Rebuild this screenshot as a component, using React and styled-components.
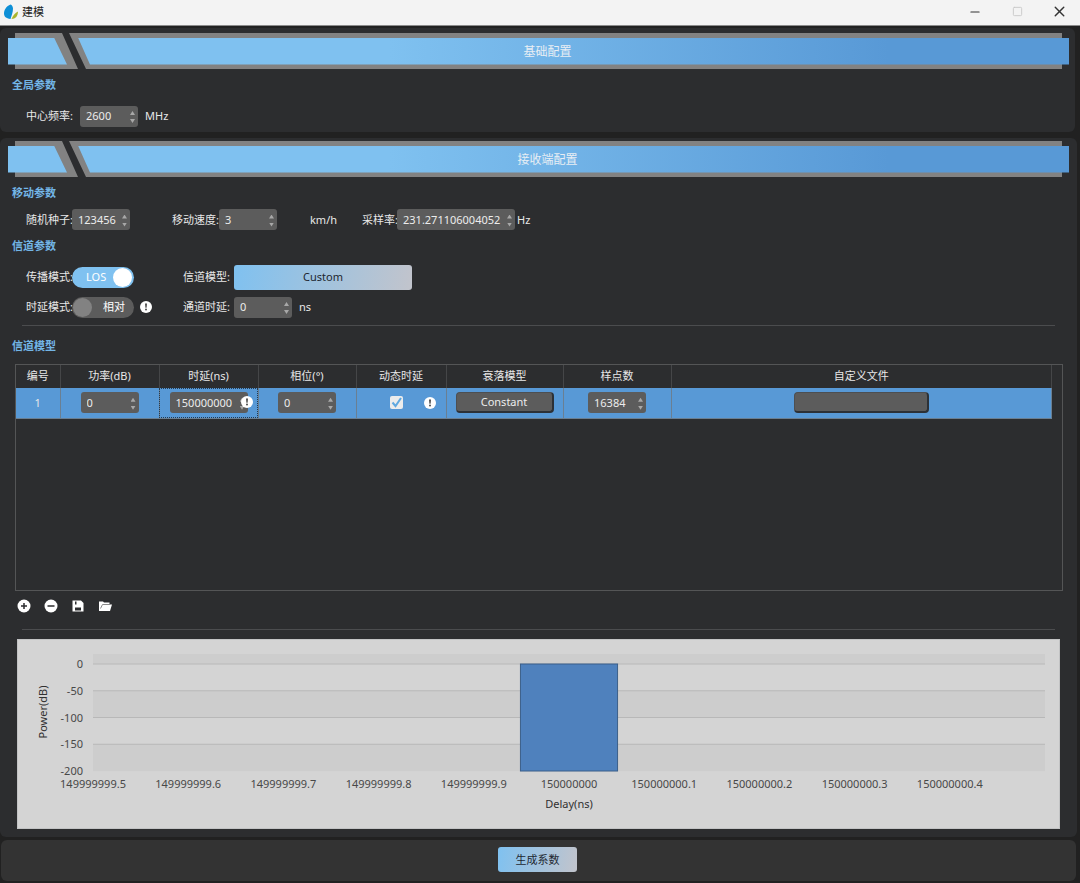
import { useState } from "react";
import styled, { createGlobalStyle } from "styled-components";
import { Minus, Square, X } from "lucide-react";

const GlobalStyle = createGlobalStyle`
	* {
		box-sizing: border-box;
	}
	body {
		margin: 0;
		background-color: #212121;
	}
	body, button, input {
		font-family: "Noto Sans", "Noto Sans CJK SC", sans-serif;
		font-size: 11px;
		line-height: 16px;
	}
`;

const Container = styled.div`
	display: flex;
	flex-direction: column;
	min-height: 100vh;
	color: #e8e8e8;
`;

const TitleBar = styled.header`
	display: flex;
	align-items: center;
	height: 26px;
	padding: 0 0 2px 4px;
	background-color: #f3f3f3;
	border-bottom: 1px solid #8a8a8a;
	color: #1b1b1b;
`;

const AppName = styled.h1`
	flex: 1;
	margin: 0 0 0 4px;
	font-size: 11px;
	font-weight: 400;
`;

const WindowButton = styled.button`
	display: flex;
	align-items: center;
	justify-content: center;
	width: 42px;
	height: 24px;
	padding: 0;
	border: none;
	background: none;
	color: #333;

	&:disabled {
		color: #c8c8c8;
	}
`;

const Main = styled.main`
	flex: 1;
	display: flex;
	flex-direction: column;
	gap: 6px;
	padding: 2px 3px 3px 0;
`;

const Panel = styled.section`
	display: flex;
	flex-direction: column;
	flex: ${(props) => (props.$grow ? 1 : "none")};
	padding: ${(props) => (props.$grow ? "3px 8px 8px" : "5px 6px 1px 8px")};
	margin-right: ${(props) => (props.$grow ? 0 : "2px")};
	border-radius: 6px;
	background-color: #2c2d2f;
`;

const Banner = styled.div`
	display: grid;
	align-items: center;
	height: 36px;

	& > * {
		grid-area: 1 / 1;
	}
`;

const Plate = styled.div`
	height: 36px;
	margin: 0 7px;
	background-color: #828282;
	clip-path: polygon(0 0, 47px 0, 63px 100%, 71px 100%, 54px 0, 100% 0, 100% 100%, 0 100%);
`;

const BannerTitle = styled.h2`
	height: 27px;
	margin: 0;
	padding-left: 18px;
	font-size: 12px;
	font-weight: 400;
	line-height: 28px;
	text-align: center;
	color: #e8eef4;
	background: linear-gradient(to right, #7fc1f0 36%, #5899d6 83%);
	clip-path: polygon(0 0, 46px 0, 59px 100%, 82px 100%, 70px 0, 100% 0, 100% 100%, 0 100%);
`;

const Heading = styled.h3`
	margin: 8px 4px;
	font-size: 11px;
	font-weight: 700;
	color: #73b5e6;
`;

const Row = styled.div`
	display: grid;
	align-items: center;
	grid-template-columns: ${(props) => props.$columns};
	min-height: ${(props) => props.$height || "30px"};
	padding-left: 18px;
	white-space: nowrap;
`;

const InfoCell = styled.div`
	display: flex;
	align-items: center;
	gap: 6px;
`;

const SpinBox = styled.div`
	display: inline-flex;
	vertical-align: middle;
	align-items: center;
	width: ${(props) => props.$width || "58px"};
	height: 21px;
	padding: 0 3px 0 6px;
	border-radius: 3px;
	background-color: #5c5c5c;
`;

const SpinInput = styled.input`
	flex: 1;
	min-width: 0;
	padding: 0;
	border: none;
	outline: none;
	background: none;
	color: #ececec;
`;

const Arrows = styled.div`
	display: flex;
	flex-direction: column;
	gap: 4px;
	padding-top: 2px;
`;

const Arrow = styled.button`
	width: 5px;
	height: 4px;
	padding: 0;
	border: none;
	background-color: #a8a8a8;
	clip-path: ${(props) =>
		props.$down ? "polygon(0 0, 100% 0, 50% 100%)" : "polygon(50% 0, 100% 100%, 0 100%)"};
`;

const Switch = styled.label`
	display: flex;
	align-items: center;
	justify-content: space-between;
	flex-direction: ${(props) => (props.$on ? "row" : "row-reverse")};
	width: 62px;
	height: 21px;
	padding: ${(props) => (props.$on ? "0 2px 0 14px" : "0 9px 0 1px")};
	border-radius: 11px;
	color: #fff;
	background-color: ${(props) => (props.$on ? "#7fc1f0" : "#5c5c5c")};
`;

const SwitchInput = styled.input`
	appearance: none;
	width: 19px;
	height: 19px;
	margin: 0;
	border-radius: 50%;
	background-color: #828282;

	&:checked {
		background-color: #fff;
	}
`;

const GradientButton = styled.button`
	width: ${(props) => props.$width};
	height: 25px;
	padding: 0;
	border: none;
	border-radius: 3px;
	color: #1d2730;
	background: linear-gradient(100deg, #7fc1f0, #c2c4cc);
`;

const Divider = styled.hr`
	width: calc(100% - 28px);
	height: 1px;
	margin: ${(props) => props.$margin};
	border: none;
	background-color: #4b4c4e;
`;

const TableFrame = styled.div`
	flex: 1;
	min-height: 120px;
	margin: 2px 6px 0 7px;
	padding-right: 10px;
	border: 1px solid #545556;
`;

const Table = styled.table`
	width: 100%;
	table-layout: fixed;
	border-collapse: collapse;
`;

const Th = styled.th`
	height: 23px;
	padding: 0 0 2px;
	border-right: 1px solid #454648;
	font-weight: 400;
`;

const Td = styled.td`
	height: 30px;
	padding: 0;
	border-right: 1px solid #6a7f92;
	border-bottom: 1px solid #6a7f92;
	outline: ${(props) => (props.$focused ? "1px dotted #223a52" : "none")};
	outline-offset: -1px;
	text-align: center;
	background-color: #5899d6;
`;

const Badge = styled.span`
	position: relative;
	display: inline-block;

	& > svg {
		position: absolute;
		top: 4px;
		right: -5px;
	}
`;

const CheckCell = styled.div`
	display: flex;
	align-items: center;
	justify-content: flex-end;
	gap: 21px;
	padding-right: 10px;
`;

const CheckBox = styled.span`
	display: grid;
	width: 13px;
	height: 13px;

	& > * {
		grid-area: 1 / 1;
	}
	& > svg {
		pointer-events: none;
	}
`;

const CheckInput = styled.input`
	appearance: none;
	width: 13px;
	height: 13px;
	margin: 0;
	border-radius: 2px;
	background-color: #ececec;
`;

const DarkButton = styled.button`
	width: ${(props) => props.$width};
	height: 21px;
	padding: 0;
	border: 1px solid #4d4f52;
	border-right: 2px solid #2c3137;
	border-bottom: 2px solid #2c3137;
	border-radius: 4px;
	vertical-align: middle;
	color: #ececec;
	background-color: #5c5c5c;
`;

const Tools = styled.div`
	display: flex;
	gap: 13px;
	padding: 8px 9px 0;
`;

const ToolButton = styled.button`
	display: flex;
	width: 14px;
	height: 14px;
	padding: 0;
	border: none;
	background: none;
	color: #fff;
`;

const ChartFrame = styled.div`
	height: 190px;
	margin: 0 9px;
	padding: 14px 14px 0 75px;
	border: 1px solid #c2c3c4;
	background-color: #d4d4d4;
`;

const Plot = styled.svg`
	display: block;
	width: 100%;
	height: 117px;
	overflow: visible;
	font-size: 11px;
	fill: #484848;
`;

const Footer = styled.footer`
	display: flex;
	align-items: center;
	justify-content: center;
	height: 41px;
	margin: 0 4px 2px 1px;
	padding: 0 2px 2px 0;
	border-radius: 6px;
	background-color: #333;
`;

const Logo = () => (
	<svg width="14" height="16" viewBox="0 0 14 16" aria-hidden="true">
		<path d="M6.5 0.5C2.5 2 0 6 0 9.5C0 12.500 2 14.500 6.500 15C7.500 12 9 8 9 4.500C8.800 2.500 8 1 6.500 0.500Z" fill="#0d8fd6" />
		<path d="M14 7.500C11 9 9 11.500 7.500 15C11.500 15 14 12 14 7.500Z" fill="#a9b42c" />
	</svg>
);

const InfoIcon = () => (
	<svg width="12" height="12" viewBox="0 0 12 12" aria-hidden="true">
		<circle cx="6" cy="6" r="6" fill="#fff" />
		<path d="M5 2.500h2l-0.400 4.200h-1.200z" fill="#4a4a4a" />
		<circle cx="6" cy="8.600" r="1" fill="#4a4a4a" />
	</svg>
);

const Spin = ({ id, label, value, width }) => {
	const [text, setText] = useState(value);
	const step = (delta) => setText(String(Number(text) + delta));

	return (
		<SpinBox $width={width}>
			<SpinInput
				id={id}
				aria-label={label}
				value={text}
				onChange={(e) => setText(e.target.value)}
			/>
			<Arrows>
				<Arrow aria-label="增加" onClick={() => step(1)} />
				<Arrow $down aria-label="减少" onClick={() => step(-1)} />
			</Arrows>
		</SpinBox>
	);
};

const Toggle = ({ id, defaultOn, onText, offText }) => {
	const [on, setOn] = useState(defaultOn);

	return (
		<Switch $on={on}>
			<span>{on ? onText : offText}</span>
			<SwitchInput
				id={id}
				type="checkbox"
				checked={on}
				onChange={(e) => setOn(e.target.checked)}
			/>
		</Switch>
	);
};

const SectionBanner = ({ title }) => (
	<Banner>
		<Plate />
		<BannerTitle>{title}</BannerTitle>
	</Banner>
);

const columns = [
	{ name: "编号", width: 44 },
	{ name: "功率(dB)", width: 99 },
	{ name: "时延(ns)", width: 99 },
	{ name: "相位(°)", width: 98 },
	{ name: "动态时延", width: 90 },
	{ name: "衰落模型", width: 117 },
	{ name: "样点数", width: 108 },
	{ name: "自定义文件" },
];

const ChannelTable = () => (
	<Table>
		<colgroup>
			{columns.map((col) => (
				<col key={col.name} width={col.width} />
			))}
		</colgroup>
		<thead>
			<tr>
				{columns.map((col) => (
					<Th key={col.name}>{col.name}</Th>
				))}
			</tr>
		</thead>
		<tbody>
			<tr>
				<Td>1</Td>
				<Td>
					<Spin label="功率" value="0" />
				</Td>
				<Td $focused>
					<Badge>
						<Spin label="时延" value="150000000" width="78px" />
						<InfoIcon />
					</Badge>
				</Td>
				<Td>
					<Spin label="相位" value="0" />
				</Td>
				<Td>
					<CheckCell>
						<CheckBox>
							<CheckInput type="checkbox" defaultChecked aria-label="动态时延" />
							<svg width="13" height="13" viewBox="0 0 13 13">
								<path d="M2.500 6.500L5.500 10L11 2" fill="none" stroke="#5fa8e0" strokeWidth="2" />
							</svg>
						</CheckBox>
						<InfoIcon />
					</CheckCell>
				</Td>
				<Td>
					<DarkButton $width="98px">Constant</DarkButton>
				</Td>
				<Td>
					<Spin label="样点数" value="16384" />
				</Td>
				<Td>
					<DarkButton $width="135px" aria-label="自定义文件" />
				</Td>
			</tr>
		</tbody>
	</Table>
);

const delays = [
	"149999999.5",
	"149999999.6",
	"149999999.7",
	"149999999.8",
	"149999999.9",
	"150000000",
	"150000000.1",
	"150000000.2",
	"150000000.3",
	"150000000.4",
];
const powers = [0, -50, -100, -150, -200];

// 10px of headroom above 0 dB, then 107px down to -200 dB
const powerY = (power) => 10 - (power * 107) / 200;

const PowerChart = () => (
	<ChartFrame>
		<Plot>
			<rect width="100%" height="10" fill="#cdcdcd" />
			<rect y={powerY(-50)} width="100%" height="27" fill="#cdcdcd" />
			<rect y={powerY(-150)} width="100%" height="27" fill="#cdcdcd" />
			{powers.slice(0, 4).map((power) => (
				<line
					key={power}
					x2="100%"
					y1={powerY(power)}
					y2={powerY(power)}
					stroke="#b8b8b8"
				/>
			))}
			{powers.map((power) => (
				<text key={power} x="-10" y={powerY(power) + 4} textAnchor="end">
					{power}
				</text>
			))}
			<rect x="44.9%" y="10" width="10.2%" height="107" fill="#4f81bd" stroke="#3b5f8a" />
			{delays.map((delay, i) => (
				<text key={delay} x={`${i * 10}%`} y="134" textAnchor="middle">
					{delay}
				</text>
			))}
			<text x="50%" y="154" textAnchor="middle" fill="#303030">
				Delay(ns)
			</text>
			<text transform="translate(-46 58) rotate(-90)" textAnchor="middle" fill="#303030">
				Power(dB)
			</text>
		</Plot>
	</ChartFrame>
);

const App = () => {
	return (
		<>
			<GlobalStyle />
			<Container>
				<TitleBar>
					<Logo />
					<AppName>建模</AppName>
					<WindowButton aria-label="最小化">
						<Minus size={14} strokeWidth={2} />
					</WindowButton>
					<WindowButton disabled aria-label="最大化">
						<Square size={11} strokeWidth={2} />
					</WindowButton>
					<WindowButton aria-label="关闭">
						<X size={17} strokeWidth={2} />
					</WindowButton>
				</TitleBar>
				<Main>
					<Panel>
						<SectionBanner title="基础配置" />
						<Heading>全局参数</Heading>
						<Row $columns="54px 65px auto">
							<label htmlFor="freq">中心频率:</label>
							<Spin id="freq" value="2600" />
							<span>MHz</span>
						</Row>
					</Panel>
					<Panel $grow>
						<SectionBanner title="接收端配置" />
						<Heading>移动参数</Heading>
						<Row $columns="46px 100px 47px 91px 52px 35px 120px auto" $height="21px">
							<label htmlFor="seed">随机种子:</label>
							<Spin id="seed" value="123456" />
							<label htmlFor="speed">移动速度:</label>
							<Spin id="speed" value="3" />
							<span>km/h</span>
							<label htmlFor="rate">采样率:</label>
							<Spin id="rate" value="231.271106004052" width="118px" />
							<span>Hz</span>
						</Row>
						<Heading>信道参数</Heading>
						<Row $columns="46px 111px 51px auto">
							<label htmlFor="mode">传播模式:</label>
							<Toggle id="mode" defaultOn onText="LOS" offText="NLOS" />
							<label htmlFor="model">信道模型:</label>
							<GradientButton id="model" $width="178px">
								Custom
							</GradientButton>
						</Row>
						<Row $columns="46px 111px 51px 65px auto">
							<label htmlFor="delayMode">时延模式:</label>
							<InfoCell>
								<Toggle id="delayMode" defaultOn={false} onText="绝对" offText="相对" />
								<InfoIcon />
							</InfoCell>
							<label htmlFor="channelDelay">通道时延:</label>
							<Spin id="channelDelay" value="0" />
							<span>ns</span>
						</Row>
						<Divider $margin="3px 14px 4px" />
						<Heading>信道模型</Heading>
						<TableFrame>
							<ChannelTable />
						</TableFrame>
						<Tools>
							<ToolButton aria-label="添加">
								<svg width="14" height="14" viewBox="0 0 14 14">
									<circle cx="7" cy="7" r="6.500" fill="currentColor" />
									<path d="M7 4v6M4 7h6" stroke="#2c2d2f" strokeWidth="1.500" />
								</svg>
							</ToolButton>
							<ToolButton aria-label="删除">
								<svg width="14" height="14" viewBox="0 0 14 14">
									<circle cx="7" cy="7" r="6.500" fill="currentColor" />
									<path d="M3.500 7h7" stroke="#2c2d2f" strokeWidth="1.500" />
								</svg>
							</ToolButton>
							<ToolButton aria-label="保存">
								<svg width="14" height="14" viewBox="0 0 14 14">
									<path d="M1.500 1.500h8.500l2.500 2.500v8.500h-11z" fill="currentColor" />
									<path d="M4 2.500h1.500v3h-1.500zM4 8.500h6v3h-6z" fill="#2c2d2f" />
								</svg>
							</ToolButton>
							<ToolButton aria-label="打开">
								<svg width="14" height="14" viewBox="0 0 14 14">
									<path d="M1 2.500h4l1 1h5.500v2h2.500l-2 6.500h-11z" fill="currentColor" />
									<path d="M2.500 9.500L4.500 5.500h7.500" stroke="#8a8a8a" fill="none" />
								</svg>
							</ToolButton>
						</Tools>
						<Divider $margin="16px 14px 9px" />
						<PowerChart />
					</Panel>
				</Main>
				<Footer>
					<GradientButton $width="79px">生成系数</GradientButton>
				</Footer>
			</Container>
		</>
	);
};

export default App;
